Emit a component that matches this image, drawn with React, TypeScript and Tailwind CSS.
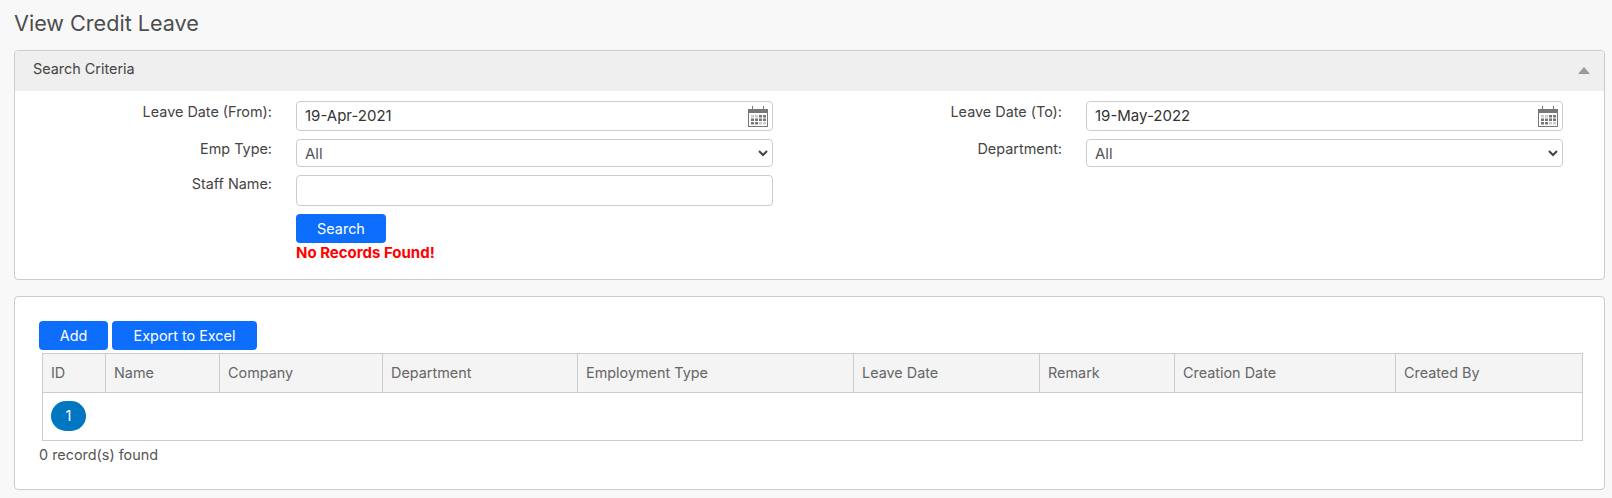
import React from "react";

function CalendarIcon() {
  return (
    <svg width="20" height="21" viewBox="0 0 20 21" className="block">
      <rect x="0.5" y="3.5" width="19" height="17" fill="#fff" stroke="#777" />
      <rect x="0" y="3" width="20" height="4" fill="#777" />
      <rect x="4" y="0" width="1" height="4" fill="#777" />
      <rect x="15" y="0" width="1" height="4" fill="#777" />
      <g fill="#777">
        <rect x="3" y="9" width="3" height="2.5" fill="#ccc" />
        <rect x="7" y="9" width="3" height="2.5" fill="#ccc" />
        <rect x="11" y="9" width="3" height="2.5" />
        <rect x="15" y="9" width="3" height="2.5" />
        <rect x="3" y="12.5" width="3" height="2.5" />
        <rect x="7" y="12.5" width="3" height="2.5" />
        <rect x="11" y="12.5" width="3" height="2.5" />
        <rect x="15" y="12.5" width="3" height="2.5" />
        <rect x="3" y="16" width="3" height="2.5" />
        <rect x="7" y="16" width="3" height="2.5" />
        <rect x="11" y="16" width="3" height="2.5" fill="#ccc" />
        <rect x="15" y="16" width="3" height="2.5" fill="#ccc" />
      </g>
    </svg>
  );
}

function DateField({ value }: { value: string }) {
  return (
    <div className="h-[30px] w-[477px] rounded border border-[#cccccc] bg-white pl-[8px] pr-[4px] flex items-center justify-between">
      <span className="text-[15px] text-[#333]">{value}</span>
      <CalendarIcon />
    </div>
  );
}

function SelectField() {
  return (
    <div className="h-[28px] w-[477px] rounded border border-[#cccccc] bg-white pl-[8px] pr-[4px] flex items-center justify-between">
      <span className="text-[15px] text-[#555] pt-[2px]">All</span>
      <svg width="10" height="8" viewBox="0 0 10 8" className="block">
        <path d="M1 2 L5 6 L9 2" fill="none" stroke="#444" strokeWidth="2" />
      </svg>
    </div>
  );
}

function Label({ children }: { children: React.ReactNode }) {
  return <div className="text-[14.4px] leading-[20px] text-[#444] text-right">{children}</div>;
}

const cols = [
  ["ID", "w-[63px]"],
  ["Name", "w-[114px]"],
  ["Company", "w-[163px]"],
  ["Department", "w-[195px]"],
  ["Employment Type", "w-[276px]"],
  ["Leave Date", "w-[186px]"],
  ["Remark", "w-[135px]"],
  ["Creation Date", "w-[221px]"],
  ["Created By", ""],
];

export default function App() {
  return (
    <div
      className="h-[498px] w-[1612px] overflow-hidden bg-[#f8f8f8] px-[14px]"
      style={{ fontFamily: "Inter, 'Liberation Sans', sans-serif" }}
    >
      <div className="h-[50px] relative">
        <h1 className="pt-[9px] text-[21.6px] leading-[28px] font-normal text-[#4d4d4d]">View Credit Leave</h1>
      </div>

      <div className="h-[230px] w-[1591px] rounded border border-[#cccccc] bg-white overflow-hidden">
        <div className="h-[40px] bg-[#efefef] pl-[18px] pr-[14px] pb-[5px] flex items-center justify-between">
          <span className="text-[14.4px] text-[#444]">Search Criteria</span>
          <svg width="12" height="7" viewBox="0 0 12 7" className="block mt-[4px]">
            <path d="M6 0 L12 7 L0 7 Z" fill="#999" />
          </svg>
        </div>
        <div className="flex pt-[10px]">
          <div className="w-[790px] shrink-0 grid grid-cols-[257px_477px] gap-x-[24px] content-start auto-rows-min">
            <div className="pt-[1px]"><Label>Leave Date (From):</Label></div>
            <DateField value="19-Apr-2021" />
            <div className="pt-[8px]"><Label>Emp Type:</Label></div>
            <div className="pt-[8px]"><SelectField /></div>
            <div className="pt-[7px]"><Label>Staff Name:</Label></div>
            <div className="pt-[8px]">
              <div className="h-[31px] w-[477px] rounded border border-[#cccccc] bg-white" />
            </div>
            <div />
            <div className="pt-[8px]">
              <button className="h-[29px] w-[90px] rounded bg-[#0d6efd] text-[14.4px] text-white">Search</button>
              <div className="text-[15px] leading-[18px] font-bold text-[#ff0000] mt-[1px]">No Records Found!</div>
            </div>
          </div>
          <div className="grid grid-cols-[257px_477px] gap-x-[24px] content-start auto-rows-min">
            <div className="pt-[1px]"><Label>Leave Date (To):</Label></div>
            <DateField value="19-May-2022" />
            <div className="pt-[8px]"><Label>Department:</Label></div>
            <div className="pt-[8px]"><SelectField /></div>
          </div>
        </div>
      </div>

      <div className="mt-[16px] h-[194px] w-[1591px] rounded border border-[#cccccc] bg-white pt-[24px] pl-[24px]">
        <div className="flex gap-[4px]">
          <button className="h-[29px] w-[69px] rounded bg-[#0d6efd] text-[14.4px] text-white">Add</button>
          <button className="h-[29px] w-[145px] rounded bg-[#0d6efd] text-[14.4px] text-white">Export to Excel</button>
        </div>
        <div className="ml-[3px] mt-[3px] w-[1541px] border border-[#cccccc]">
          <div className="flex h-[39px] bg-[#f4f4f4] border-b border-[#cccccc]">
            {cols.map(([name, w]) => (
              <div
                key={name}
                className={`${w} ${w ? "border-r border-[#cccccc]" : "flex-1"} flex items-center pl-[8px] text-[14.4px] text-[#666]`}
              >
                {name}
              </div>
            ))}
          </div>
          <div className="h-[47px] pl-[8px] pt-[8px]">
            <div className="h-[30px] w-[35px] rounded-full bg-[#0077c0] text-white text-[14.4px] flex items-center justify-center">1</div>
          </div>
        </div>
        <div className="mt-[4px] text-[14.4px] leading-[20px] text-[#555]">0 record(s) found</div>
      </div>
    </div>
  );
}
